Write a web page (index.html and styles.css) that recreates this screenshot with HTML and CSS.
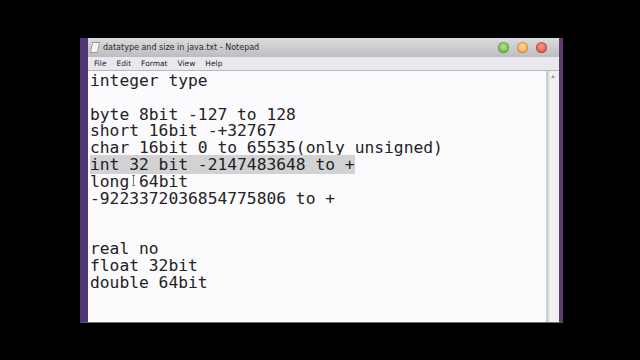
FILE: index.html
```html
<!DOCTYPE html>
<html lang="en">
<head>
    <meta charset="UTF-8">
    <meta name="viewport" content="width=device-width, initial-scale=1.0">
    <title>datatype and size in java.txt - Notepad</title>
    <link rel="stylesheet" href="styles.css">
</head>
<body>
    <div class="window">
        <div class="titlebar">
            <span class="app-icon"></span>
            <span class="title">datatype and size in java.txt - Notepad</span>
            <div class="controls">
                <span class="dot green"></span>
                <span class="dot orange"></span>
                <span class="dot red"></span>
            </div>
        </div>
        <div class="menubar">
            <span>File</span>
            <span>Edit</span>
            <span>Format</span>
            <span>View</span>
            <span>Help</span>
        </div>
        <div class="editor">
            <div class="text">
                <div class="line">integer type</div>
                <div class="line"> </div>
                <div class="line">byte 8bit -127 to 128</div>
                <div class="line">short 16bit -+32767</div>
                <div class="line">char 16bit 0 to 65535(only unsigned)</div>
                <div class="line"><span class="selected">int 32 bit -2147483648 to +</span></div>
                <div class="line">long<span class="ibeam"> </span>64bit</div>
                <div class="line">-9223372036854775806 to +</div>
                <div class="line"> </div>
                <div class="line"> </div>
                <div class="line">real no</div>
                <div class="line">float 32bit</div>
                <div class="line">double 64bit</div>
            </div>
            <div class="scrollbar">
                <span class="arrow"></span>
            </div>
        </div>
    </div>
</body>
</html>
```

FILE: styles.css
```css
body {
    margin: 0;
    background: #000;
    width: 640px;
    height: 360px;
    overflow: hidden;
}
.window {
    margin: 38px 0 0 80px;
    width: 471px;
    height: 284px;
    border-left: 8px solid #4e3574;
    border-right: 4px solid #5c3a70;
    border-bottom: 1px solid #6a6a78;
    display: flex;
    flex-direction: column;
    background: #fbfafd;
}
.titlebar {
    height: 19px;
    display: flex;
    align-items: center;
    background: linear-gradient(to bottom, #dcdcde, #bdbdc0);
    font-family: "DejaVu Sans", sans-serif;
    font-size: 8px;
    color: #2a2a2a;
    padding-left: 3px;
}
.app-icon {
    width: 6px;
    height: 9px;
    background: #f4f4f4;
    border: 1px solid #9a9a9a;
    margin-right: 4px;
    transform: skewX(-12deg);
}
.controls {
    margin-left: auto;
    display: flex;
    gap: 8px;
    margin-right: 12px;
}
.dot {
    width: 11px;
    height: 11px;
    border-radius: 50%;
    box-shadow: inset 0 0 0 1px rgba(0, 0, 0, 0.2);
}
.green { background: radial-gradient(circle at 50% 40%, #b4e48a, #5aa634); }
.orange { background: radial-gradient(circle at 50% 40%, #ffd88a, #f0a030); }
.red { background: radial-gradient(circle at 50% 40%, #ff9a8a, #d83a2a); }
.menubar {
    height: 13px;
    display: flex;
    align-items: center;
    gap: 10px;
    padding-left: 6px;
    background: #e9e8ee;
    border-bottom: 1px solid #b8b8c0;
    font-family: "DejaVu Sans", sans-serif;
    font-size: 7.5px;
    color: #222;
}
.editor {
    flex: 1;
    display: flex;
    min-height: 0;
}
.text {
    flex: 1;
    padding: 2px 0 0 2px;
    font-family: "DejaVu Sans Mono", monospace;
    font-size: 16.3px;
    line-height: 16.83px;
    color: #232323;
    overflow: hidden;
}
.line {
    white-space: pre;
    height: 16.83px;
}
.selected {
    background: #d2d2d4;
}
.ibeam {
    position: relative;
}
.ibeam::after {
    content: "";
    position: absolute;
    left: 3px;
    top: 3px;
    width: 3px;
    height: 11px;
    border-top: 1px solid #777;
    border-bottom: 1px solid #777;
    background: linear-gradient(to right, transparent 1px, #777 1px, #777 2px, transparent 2px);
    box-sizing: border-box;
}
.scrollbar {
    width: 12px;
    background: linear-gradient(to right, #c4c4c8, #f2f2f4 3px, #eeeef0);
    border-left: 1px solid #d0d0d4;
    display: flex;
    justify-content: center;
}
.arrow {
    margin-top: 4px;
    width: 0;
    height: 0;
    border-left: 2px solid transparent;
    border-right: 2px solid transparent;
    border-bottom: 3px solid #999;
}
```
